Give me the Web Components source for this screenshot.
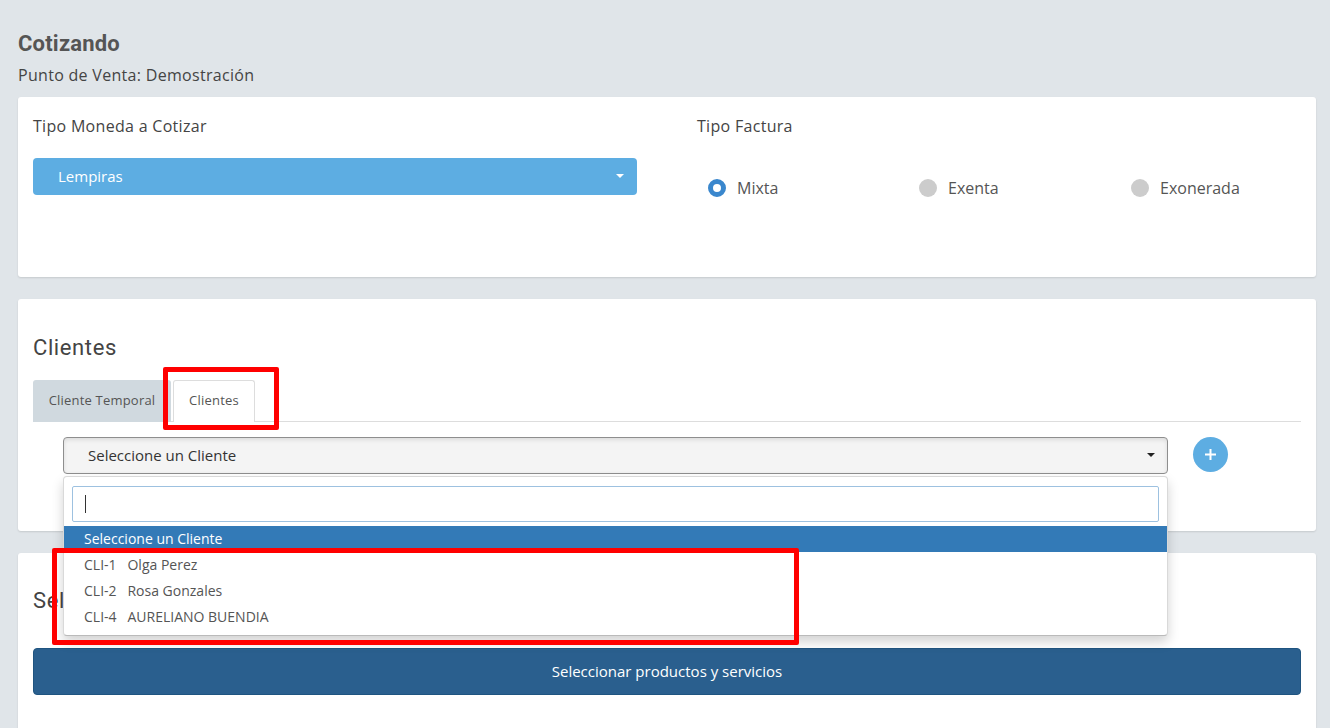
<!DOCTYPE html>
<html>
<head>
<meta charset="utf-8">
<style>
html,body{margin:0;height:728px;overflow:hidden}
body{background:#e0e5e9;font-family:"Open Sans",sans-serif;font-size:14px;color:#333}
</style>
</head>
<body>
<quote-page></quote-page>
<script>
class quoteCard extends HTMLElement{
    constructor(){
        super();
        this.attachShadow({mode:'open'});
        this.shadowRoot.innerHTML = `
        <style>
            :host{
                display:block;
                box-sizing:border-box;
                background:#fff;
                border-radius:3px;
                box-shadow:0 1px 2px rgba(0,0,0,.12);
                padding:15px;
            }
        </style>
        <slot></slot>`
    }
}
customElements.define('quote-card', quoteCard)

class radioOption extends HTMLElement{
    constructor(){
        super();
        this.attachShadow({mode:'open'});
    }
    connectedCallback(){
        const on = this.hasAttribute('checked');
        this.shadowRoot.innerHTML = `
        <style>
            :host{
                display:flex;
                align-items:center;
                gap:11px;
                height:22px;
                font-family:"Open Sans",sans-serif;
                font-size:16px;
                line-height:20px;
                color:#555;
            }
            .dot{
                box-sizing:border-box;
                width:18px;
                height:18px;
                border-radius:50%;
                background:#ccc;
            }
            .dot.on{background:#fff;border:5px solid #3a87cd}
        </style>
        <span class="dot ${on?'on':''}"></span><span class="txt"><slot></slot></span>`
    }
}
customElements.define('radio-option', radioOption)

class blueSelect extends HTMLElement{
    constructor(){
        super();
        this.attachShadow({mode:'open'});
        this.shadowRoot.innerHTML = `
        <style>
            :host{
                display:flex;
                box-sizing:border-box;
                align-items:center;
                justify-content:space-between;
                height:37px;
                padding:0 13px 2px 25px;
                background:#5dade2;
                border-radius:4px;
                color:#fff;
                font-family:"Open Sans",sans-serif;
                font-size:15px;
            }
            i{
                border-top:4px solid #fff;
                border-left:4px solid transparent;
                border-right:4px solid transparent;
            }
        </style>
        <span><slot></slot></span><i></i>`
    }
}
customElements.define('blue-select', blueSelect)

class tabBar extends HTMLElement{
    constructor(){
        super();
        this.attachShadow({mode:'open'});
        this.shadowRoot.innerHTML = `
        <style>
            :host{
                display:flex;
                height:41px;
                border-bottom:1px solid #ddd;
                font-family:"Open Sans",sans-serif;
                font-size:13px;
                letter-spacing:.2px;
                color:#555;
            }
            .tab{
                box-sizing:border-box;
                height:42px;
                line-height:41px;
                text-align:center;
                border-radius:3px 3px 0 0;
            }
            .off{width:138px;background:#d0d9df}
            .on{
                width:82px;
                margin-left:2px;
                line-height:39px;
                background:#fff;
                border:1px solid #ddd;
                border-bottom:0;
            }
        </style>
        <div class="tab off">Cliente Temporal</div>
        <div class="tab on">Clientes</div>`
    }
}
customElements.define('tab-bar', tabBar)

class clientSelect extends HTMLElement{
    constructor(){
        super();
        this.attachShadow({mode:'open'});
        this.shadowRoot.innerHTML = `
        <style>
            :host{
                display:block;
                position:relative;
                font-family:"Open Sans",sans-serif;
                font-size:14px;
            }
            .btn{
                box-sizing:border-box;
                height:37px;
                display:flex;
                align-items:center;
                justify-content:space-between;
                padding:0 12px 2px 24px;
                background:#f4f4f4;
                border:1px solid #8e8e8e;
                border-radius:4px;
                color:#333;
                font-size:15px;
                box-shadow:inset 0 2px 4px rgba(0,0,0,.1);
            }
            .btn i{
                border-top:4px solid #222;
                border-left:4px solid transparent;
                border-right:4px solid transparent;
            }
            .menu{
                position:absolute;
                z-index:5;
                top:39px;
                left:0;
                right:0;
                box-sizing:border-box;
                height:160px;
                background:#fff;
                border:1px solid rgba(0,0,0,.15);
                border-bottom-color:rgba(0,0,0,.27);
                border-radius:4px;
                box-shadow:0 6px 12px rgba(0,0,0,.175);
                padding-top:9px;
                overflow:hidden;
            }
            .search{
                box-sizing:border-box;
                height:36px;
                margin:0 8px 4px;
                border:1px solid #9dc1e0;
                border-radius:2px;
                padding:8px 12px;
            }
            .search b{display:block;width:1px;height:18px;background:#333}
            .item{
                height:26px;
                line-height:26px;
                padding-left:20px;
                color:#555;
                white-space:pre;
            }
            .item.sel{background:#337ab7;color:#fff}
        </style>
        <div class="btn"><span>Seleccione un Cliente</span><i></i></div>
        <div class="menu">
            <div class="search"><b></b></div>
            <div class="item sel">Seleccione un Cliente</div>
            <div class="item">CLI-1   Olga Perez</div>
            <div class="item">CLI-2   Rosa Gonzales</div>
            <div class="item">CLI-4   AURELIANO BUENDIA</div>
        </div>`
    }
}
customElements.define('client-select', clientSelect)

class addButton extends HTMLElement{
    constructor(){
        super();
        this.attachShadow({mode:'open'});
        this.shadowRoot.innerHTML = `
        <style>
            :host{
                display:flex;
                align-items:center;
                justify-content:center;
                width:35px;
                height:35px;
                border-radius:50%;
                background:#5dade2;
            }
        </style>
        <svg width="11" height="11" viewBox="0 0 11 11"><path d="M5.5 0v11M0 5.5h11" stroke="#fff" stroke-width="2"/></svg>`
    }
}
customElements.define('add-button', addButton)

class redMark extends HTMLElement{
    constructor(){
        super();
        this.attachShadow({mode:'open'});
        this.shadowRoot.innerHTML = `
        <style>
            :host{
                display:block;
                position:absolute;
                z-index:9;
                box-sizing:border-box;
                border:5px solid #f00;
                border-radius:2px;
            }
        </style>`
    }
}
customElements.define('red-mark', redMark)

class quotePage extends HTMLElement{
    constructor(){
        super();
        this.attachShadow({mode:'open'});
        this.shadowRoot.innerHTML = `
        <style>
            :host{
                display:block;
                position:relative;
                box-sizing:border-box;
                height:728px;
                padding:30px 14px 0 18px;
                font-family:"Open Sans",sans-serif;
                color:#333;
            }
            h1{
                margin:0;
                font:700 22px/28px "Roboto",sans-serif;
                letter-spacing:.2px;
                color:#555;
            }
            .sub{
                margin:7px 0 11px;
                font-size:16px;
                line-height:21px;
                letter-spacing:.3px;
                color:#444;
            }
            .label{font-size:16px;line-height:22px;letter-spacing:.3px;color:#444}
            .top{display:grid;grid-template-columns:604px 1fr;column-gap:60px;height:147px;padding-top:3px}
            .top blue-select{margin-top:21px}
            .radios{display:grid;grid-template-columns:211px 212px 1fr;padding:40px 0 0 11px}
            quote-card + quote-card{margin-top:22px}
            h2{
                margin:0;
                font:400 22px/30px "Roboto",sans-serif;
                letter-spacing:.6px;
                color:#444;
            }
            .second{height:232px;padding-top:34px}
            .second tab-bar{margin-top:17px}
            .pick{display:grid;grid-template-columns:1105px 35px;column-gap:25px;padding:15px 0 0 30px}
            .third{height:190px;padding-top:33px}
            .go{
                box-sizing:border-box;
                height:47px;
                margin-top:32px;
                padding-bottom:2px;
                display:flex;
                align-items:center;
                justify-content:center;
                background:#2a5f8e;
                border:1px solid #1f5480;
                border-radius:4px;
                color:#fff;
                font-size:15px;
            }
        </style>
        <h1>Cotizando</h1>
        <div class="sub">Punto de Venta: Demostración</div>
        <quote-card class="top-card">
            <div class="top">
                <div>
                    <div class="label">Tipo Moneda a Cotizar</div>
                    <blue-select>Lempiras</blue-select>
                </div>
                <div>
                    <div class="label">Tipo Factura</div>
                    <div class="radios">
                        <radio-option checked>Mixta</radio-option>
                        <radio-option>Exenta</radio-option>
                        <radio-option>Exonerada</radio-option>
                    </div>
                </div>
            </div>
        </quote-card>
        <quote-card class="second">
            <h2>Clientes</h2>
            <tab-bar></tab-bar>
            <div class="pick">
                <client-select></client-select>
                <add-button></add-button>
            </div>
        </quote-card>
        <quote-card class="third">
            <h2>Seleccionar productos y servicios</h2>
            <div class="go">Seleccionar productos y servicios</div>
        </quote-card>
        <red-mark style="left:163px;top:367px;width:116px;height:63px"></red-mark>
        <red-mark style="left:52px;top:548px;width:747px;height:97px"></red-mark>`
    }
}
customElements.define('quote-page', quotePage)
</script>
</body>
</html>
